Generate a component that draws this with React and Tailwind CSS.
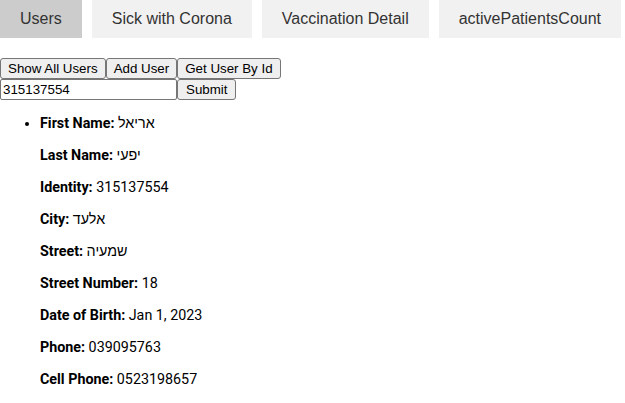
import React from "react";

const tabs = ["Users", "Sick with Corona", "Vaccination Detail", "activePatientsCount"];

const fields = [
  ["First Name:", "אריאל"],
  ["Last Name:", "יפעי"],
  ["Identity:", "315137554"],
  ["City:", "אלעד"],
  ["Street:", "שמעיה"],
  ["Street Number:", "18"],
  ["Date of Birth:", "Jan 1, 2023"],
  ["Phone:", "039095763"],
  ["Cell Phone:", "0523198657"],
];

const btn =
  "h-[21px] px-[7px] border border-[#767676] rounded-[3px] bg-[#efefef] text-[13.333px] leading-[15px] text-black";

export default function App() {
  return (
    <div className="w-[625px] h-[403px] bg-white overflow-hidden" style={{ fontFamily: "'Liberation Sans', Arial, sans-serif" }}>
      <div className="flex gap-[10px]">
        {tabs.map((t, i) => (
          <div
            key={t}
            className={`h-[38px] px-5 flex items-center text-[16px] text-[#333] ${i === 0 ? "bg-[#cccccc]" : "bg-[#f1f1f1]"}`}
          >
            {t}
          </div>
        ))}
      </div>
      <div className="mt-[20px] flex">
        <button className={btn}>Show All Users</button>
        <button className={btn}>Add User</button>
        <button className={btn}>Get User By Id</button>
      </div>
      <div className="flex">
        <div className="w-[177px] h-[21px] border border-[#767676] rounded-[2px] px-[2px] text-[13.333px] leading-[19px] text-black">
          315137554
        </div>
        <button className={`${btn} px-[8px]`}>Submit</button>
      </div>
      <ul className="mt-[13px] pl-[40px] list-disc text-[14.3px] text-black" style={{ fontFamily: "Roboto, 'Liberation Sans', sans-serif" }}>
        <li>
          {fields.map(([k, v]) => (
            <p key={k} className="h-[32px] leading-[16px]">
              <b className="font-bold">{k}</b> {v}
            </p>
          ))}
        </li>
      </ul>
    </div>
  );
}
